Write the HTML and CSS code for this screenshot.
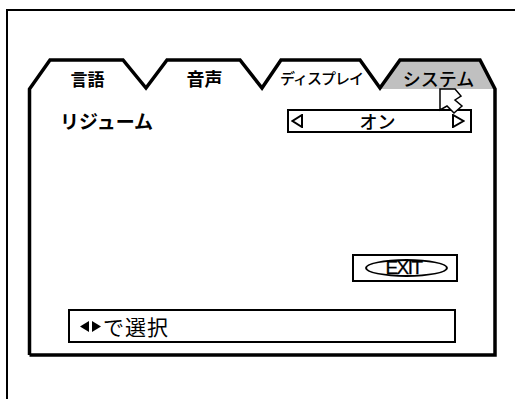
FILE: index.html
```html
<!DOCTYPE html>
<html lang="ja">
<head>
<meta charset="utf-8">
<link rel="stylesheet" href="styles.css">
</head>
<body>
<div class="screen">
  <div class="frame">
    <div class="panel">
      <svg class="outline" width="472" height="300" viewBox="0 0 472 300">
        <polygon points="352,32 373,3 453,3 468,32" fill="#c0c0c0"/>
        <polyline points="2.5,298 2.5,32 23,3 96,3 119,31 140,3 213,3 235,31 254,3 333,3 353,31 373,3 453,3 468,32 468,298 2.5,298" fill="none" stroke="#000" stroke-width="3.5" stroke-linejoin="miter"/>
      </svg>
      <div class="tabs">
        <div class="tab tab-lang">言語</div>
        <div class="tab tab-audio">音声</div>
        <div class="tab tab-display">ディスプレイ</div>
        <div class="tab tab-system">システム</div>
      </div>
      <div class="setting">
        <div class="setting-label">リジューム</div>
        <div class="option">
          <svg width="12" height="14" viewBox="0 0 12 14"><polygon points="11,1 11,13 1.5,7" fill="none" stroke="#000" stroke-width="2"/></svg>
          <span class="option-value">オン</span>
          <svg width="13" height="14" viewBox="0 0 13 14"><polygon points="1,1 1,13 11.5,7" fill="none" stroke="#000" stroke-width="2"/></svg>
        </div>
      </div>
      <div class="exit-row">
        <div class="exit-box"><div class="exit-oval">EXIT</div></div>
      </div>
      <div class="help">
        <svg class="arrows" width="21" height="11" viewBox="0 0 21 11"><polygon points="9,0 9,11 0,5.5" fill="#000"/><polygon points="12,0 12,11 21,5.5" fill="#000"/></svg>
        <span class="help-text">で選択</span>
      </div>
      <svg class="cursor" width="26" height="28" viewBox="0 0 26 28"><polygon points="1,1 16,1 22,8 16,12 23,18 15,25 8,18 1,22" fill="#fff" stroke="#000" stroke-width="1.5" stroke-linejoin="miter"/></svg>
    </div>
  </div>
</div>
</body>
</html>
```

FILE: styles.css
```css
html, body {
  margin: 0;
  padding: 0;
  background: #fff;
  overflow: hidden;
}
body {
  width: 515px;
  height: 399px;
  font-family: "Noto Sans CJK JP", "Noto Sans", sans-serif;
  color: #000;
}
.screen {
  padding: 9px 0 0 6px;
  height: 390px;
  box-sizing: border-box;
}
.frame {
  border-top: 2px solid #000;
  border-left: 2px solid #000;
  height: 400px;
  box-sizing: border-box;
}
.panel {
  position: relative;
  width: 472px;
  height: 300px;
  margin: 46px 0 0 19px;
  padding-top: 10px;
  box-sizing: border-box;
}
.outline {
  position: absolute;
  left: 0;
  top: 0;
}
.tabs {
  position: relative;
  display: grid;
  grid-template-columns: repeat(4, 117px);
  padding-left: 2px;
  height: 20px;
  align-items: center;
}
.tab {
  text-align: center;
  line-height: 20px;
  white-space: nowrap;
}
.tab-lang { font-size: 17px; font-weight: 700; padding-top: 2px; }
.tab-audio { font-size: 18px; font-weight: 700; }
.tab-display { font-size: 15px; font-weight: 500; letter-spacing: -1px; }
.tab-system { font-size: 18px; font-weight: 500; }
.setting {
  position: relative;
  display: grid;
  grid-template-columns: 227px 185px;
  padding-left: 33px;
  margin-top: 22px;
  align-items: center;
}
.setting-label {
  font-size: 19px;
  font-weight: 700;
  line-height: 24px;
}
.option {
  height: 24px;
  border: 2px solid #000;
  box-sizing: border-box;
  display: flex;
  align-items: center;
  justify-content: space-between;
  padding: 0 5px 0 2px;
}
.option svg { display: block; }
.option-value {
  font-size: 18px;
  font-weight: 500;
  line-height: 20px;
}
.exit-row {
  position: relative;
  display: flex;
  justify-content: flex-end;
  padding-right: 41px;
  margin-top: 121px;
}
.exit-box {
  width: 106px;
  height: 28px;
  border: 2px solid #000;
  box-sizing: border-box;
  display: flex;
  align-items: center;
  padding-left: 11px;
}
.exit-oval {
  width: 83px;
  height: 18px;
  border: 2px solid #000;
  border-radius: 50%;
  box-sizing: border-box;
  font-family: "Liberation Sans", Arial, sans-serif;
  font-size: 19px;
  letter-spacing: -1.5px;
  line-height: 14px;
  text-align: center;
  padding-right: 6px;
  -webkit-text-stroke: 0.3px #000;
}
.help {
  position: relative;
  width: 388px;
  height: 34px;
  margin: 27px 0 0 41px;
  border: 2px solid #000;
  box-sizing: border-box;
  display: flex;
  align-items: center;
  padding-left: 10px;
  gap: 2px;
}
.arrows { display: block; }
.help-text {
  font-size: 21px;
  letter-spacing: 1px;
  line-height: 24px;
}
.cursor {
  position: absolute;
  left: 412px;
  top: 31px;
}
```
